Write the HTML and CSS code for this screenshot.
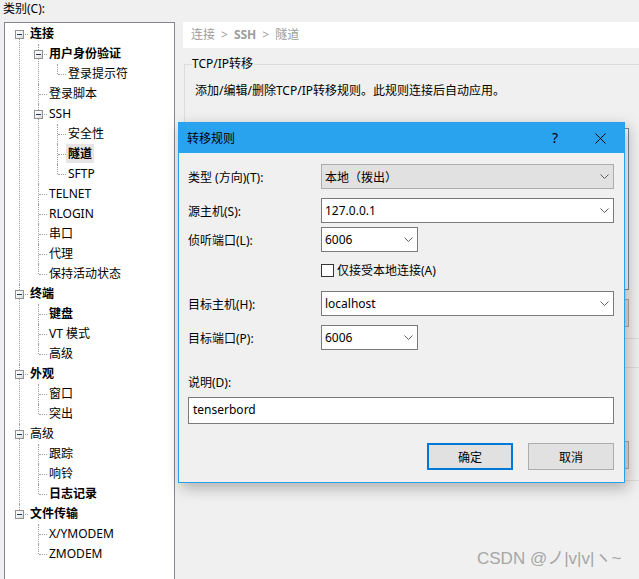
FILE: index.html
```html
<!DOCTYPE html>
<html lang="zh-CN">
<head>
<meta charset="utf-8">
<title>会话属性</title>
<link rel="stylesheet" href="styles.css">
</head>
<body>
<div class="window">
  <div class="cat-label">类别(C):</div>
  <div class="main">
    <div class="tree-box">
      <ul class="tree root">
        <li><span class="exp"></span><span class="node b">连接</span>
          <ul>
            <li><span class="exp"></span><span class="node b">用户身份验证</span>
              <ul>
                <li><span class="node">登录提示符</span></li>
              </ul>
            </li>
            <li><span class="node">登录脚本</span></li>
            <li><span class="exp"></span><span class="node">SSH</span>
              <ul>
                <li><span class="node">安全性</span></li>
                <li><span class="node b sel">隧道</span></li>
                <li><span class="node">SFTP</span></li>
              </ul>
            </li>
            <li><span class="node">TELNET</span></li>
            <li><span class="node">RLOGIN</span></li>
            <li><span class="node">串口</span></li>
            <li><span class="node">代理</span></li>
            <li><span class="node">保持活动状态</span></li>
          </ul>
        </li>
        <li><span class="exp"></span><span class="node b">终端</span>
          <ul>
            <li><span class="node b">键盘</span></li>
            <li><span class="node">VT 模式</span></li>
            <li><span class="node">高级</span></li>
          </ul>
        </li>
        <li><span class="exp"></span><span class="node b">外观</span>
          <ul>
            <li><span class="node">窗口</span></li>
            <li><span class="node">突出</span></li>
          </ul>
        </li>
        <li><span class="exp"></span><span class="node">高级</span>
          <ul>
            <li><span class="node">跟踪</span></li>
            <li><span class="node">响铃</span></li>
            <li><span class="node b">日志记录</span></li>
          </ul>
        </li>
        <li><span class="exp"></span><span class="node b">文件传输</span>
          <ul>
            <li><span class="node">X/YMODEM</span></li>
            <li><span class="node">ZMODEM</span></li>
          </ul>
        </li>
      </ul>
    </div>

    <div class="panel">
      <div class="crumb">连接<span class="sep">&gt;</span><b>SSH</b><span class="sep">&gt;</span>隧道</div>
      <fieldset class="group">
        <legend>TCP/IP转移</legend>
        <p class="desc">添加/编辑/删除TCP/IP转移规则。此规则连接后自动应用。</p>
        <div class="listbox"></div>
        <div class="btn-row">
          <span class="pbtn"></span>
        </div>
      </fieldset>
      <fieldset class="group group2">
        <legend>X11转移</legend>
        <div class="btn-row low">
          <span class="pbtn"></span>
        </div>
      </fieldset>
    </div>
  </div>

  <div class="dialog">
    <div class="titlebar">
      <span class="title">转移规则</span>
      <span class="help">?</span>
      <svg class="close" width="11" height="11" viewBox="0 0 11 11"><path d="M0.5 0.5L10.5 10.5M10.5 0.5L0.5 10.5" stroke="#000" stroke-width="1" fill="none"/></svg>
    </div>
    <div class="dlg-body">
      <div class="row r1">
        <span class="lbl">类型 (方向)(T):</span>
        <div class="combo wide fixed"><span class="val">本地（拨出）</span><svg class="chev" width="9" height="5" viewBox="0 0 9 5"><path d="M0.5 0.5L4.5 4.5L8.5 0.5" fill="none" stroke="#606060"/></svg></div>
      </div>
      <div class="row r2">
        <span class="lbl">源主机(S):</span>
        <div class="combo wide"><span class="val">127.0.0.1</span><svg class="chev" width="9" height="5" viewBox="0 0 9 5"><path d="M0.5 0.5L4.5 4.5L8.5 0.5" fill="none" stroke="#606060"/></svg></div>
      </div>
      <div class="row r3">
        <span class="lbl">侦听端口(L):</span>
        <div class="combo narrow"><span class="val">6006</span><svg class="chev" width="9" height="5" viewBox="0 0 9 5"><path d="M0.5 0.5L4.5 4.5L8.5 0.5" fill="none" stroke="#606060"/></svg></div>
      </div>
      <div class="row chk-row">
        <span class="lbl"></span>
        <span class="check"></span><span class="chk-lbl">仅接受本地连接(A)</span>
      </div>
      <div class="row r4">
        <span class="lbl">目标主机(H):</span>
        <div class="combo wide"><span class="val">localhost</span><svg class="chev" width="9" height="5" viewBox="0 0 9 5"><path d="M0.5 0.5L4.5 4.5L8.5 0.5" fill="none" stroke="#606060"/></svg></div>
      </div>
      <div class="row r5">
        <span class="lbl">目标端口(P):</span>
        <div class="combo narrow"><span class="val">6006</span><svg class="chev" width="9" height="5" viewBox="0 0 9 5"><path d="M0.5 0.5L4.5 4.5L8.5 0.5" fill="none" stroke="#606060"/></svg></div>
      </div>
      <div class="desc-lbl">说明(D):</div>
      <div class="textbox">tenserbord</div>
      <div class="dlg-btns">
        <span class="dbtn default">确定</span>
        <span class="dbtn">取消</span>
      </div>
    </div>
  </div>

  <div class="watermark">CSDN @ノ|v|v|ヽ~</div>
</div>
</body>
</html>
```

FILE: styles.css
```css
* { box-sizing: border-box; }
html, body { margin: 0; padding: 0; }
body {
  width: 639px;
  height: 579px;
  overflow: hidden;
  background: #f0f0f0;
  font-family: "Noto Sans", "Noto Sans CJK SC", sans-serif;
  font-size: 12px;
  color: #000;
}
.window {
  position: relative;
  width: 639px;
  height: 579px;
  overflow: hidden;
}
.cat-label {
  padding-left: 3px;
  padding-top: 1px;
  line-height: 16px;
  height: 22px;
}
.main {
  display: flex;
  align-items: flex-start;
  padding-left: 4px;
}

/* ---------- tree ---------- */
.tree-box {
  flex: none;
  width: 171px;
  height: 600px;
  background: #fff;
  border: 1px solid #828790;
  padding-top: 1px;
}
.tree, .tree ul {
  list-style: none;
  margin: 0;
  padding: 0;
}
.tree.root { padding-left: 14px; }
.tree ul { margin-left: 10px; }
.tree li {
  position: relative;
  padding-left: 9px;
  line-height: 20px;
}
.tree li::before {
  content: "";
  position: absolute;
  left: 0;
  top: 0;
  bottom: 0;
  border-left: 1px dotted #a0a0a0;
}
.tree li:last-child::before { bottom: auto; height: 10px; }
.tree.root > li:first-child::before { top: 10px; }
.tree li::after {
  content: "";
  position: absolute;
  left: 1px;
  top: 10px;
  width: 8px;
  border-top: 1px dotted #a0a0a0;
}
.exp {
  position: absolute;
  left: -4px;
  top: 6px;
  width: 9px;
  height: 9px;
  border: 1px solid #8e8f8f;
  background: linear-gradient(135deg, #ffffff 0%, #f2f2f2 50%, #d8d8d8 100%);
  z-index: 2;
}
.exp::after {
  content: "";
  position: absolute;
  left: 1px;
  top: 3px;
  width: 5px;
  height: 1px;
  background: #1f3a5f;
}
.node {
  display: inline-block;
  padding: 0 2px;
  height: 19px;
  line-height: 20px;
  white-space: nowrap;
}
.node.b { font-weight: 700; }
.node.sel { background: #e5e5e5; }

/* ---------- right panel ---------- */
.panel {
  flex: none;
  margin-left: 8px;
  width: 470px;
}
.crumb {
  height: 26px;
  line-height: 26px;
  background: #fff;
  padding-left: 8px;
  color: #9c9c9c;
}
.crumb b { font-weight: 700; }
.crumb .sep { padding: 0 6px; }
.group {
  margin: 8px 0 0 1px;
  padding: 0 0 11px 7px;
  border: 1px solid #dcdcdc;
  min-width: 0;
}
.group legend {
  padding: 0 1px 0 0;
  line-height: 16px;
}
.desc {
  margin: 11px 0 0 3px;
  line-height: 16px;
}
.listbox {
  margin: 29px 0 0 3px;
  width: 434px;
  height: 162px;
  background: #fff;
  border: 1px solid #828790;
}
.btn-row {
  margin-top: 9px;
  width: 437px;
  display: flex;
  justify-content: flex-end;
}
.btn-row.low { margin-top: 66px; }
.pbtn {
  width: 86px;
  height: 28px;
  border: 1px solid #adadad;
  background: #e1e1e1;
}
.group2 { margin-top: 20px; }

/* ---------- dialog ---------- */
.dialog {
  position: absolute;
  left: 178px;
  top: 122px;
  width: 447px;
  height: 361px;
  background: #f0f0f0;
  border: 1px solid #2a9fea;
  box-shadow: 3px 5px 14px rgba(0, 0, 0, 0.28);
}
.titlebar {
  height: 30px;
  background: #2aa3ef;
  display: flex;
  align-items: center;
  padding-left: 8px;
}
.help {
  margin-left: auto;
  margin-right: 37px;
  font-size: 14px;
  line-height: 16px;
}
.close {
  margin-right: 18px;
  flex: none;
}
.dlg-body {
  padding: 0 10px 0 9px;
}
.row {
  display: flex;
  align-items: center;
  height: 25px;
}
.r1 { margin-top: 11px; }
.r2 { margin-top: 9px; }
.r3 { margin-top: 4px; }
.chk-row { margin-top: 11px; height: 14px; }
.r4 { margin-top: 14px; }
.r5 { margin-top: 9px; }
.lbl {
  width: 133px;
  flex: none;
  white-space: nowrap;
}
.combo {
  height: 25px;
  background: #fff;
  border: 1px solid #7a7a7a;
  display: flex;
  align-items: center;
  padding: 0 4px 0 3px;
}
.combo.wide { width: 293px; }
.combo.narrow { width: 97px; }
.combo.fixed {
  background: #e1e1e1;
  border-color: #adadad;
}
.combo .val { flex: 1; white-space: nowrap; }
.chev { flex: none; }
.check {
  width: 13px;
  height: 13px;
  border: 1px solid #333;
  background: #fff;
  flex: none;
}
.chk-lbl { margin-left: 3px; }
.desc-lbl {
  margin-top: 25px;
  line-height: 16px;
}
.textbox {
  margin-top: 6px;
  height: 27px;
  background: #fff;
  border: 1px solid #7a7a7a;
  padding-left: 4px;
  line-height: 23px;
}
.dlg-btns {
  margin-top: 19px;
  display: flex;
  justify-content: flex-end;
  gap: 15px;
}
.dbtn {
  width: 86px;
  height: 27px;
  background: #e1e1e1;
  border: 1px solid #adadad;
  display: flex;
  align-items: center;
  justify-content: center;
}
.dbtn.default { border: 2px solid #0078d7; }

/* ---------- watermark ---------- */
.watermark {
  position: absolute;
  left: 477px;
  top: 549px;
  font-family: "Liberation Sans", "Noto Sans CJK SC", sans-serif;
  font-size: 17px;
  line-height: 20px;
  color: #a6a6a6;
  white-space: nowrap;
}
```
